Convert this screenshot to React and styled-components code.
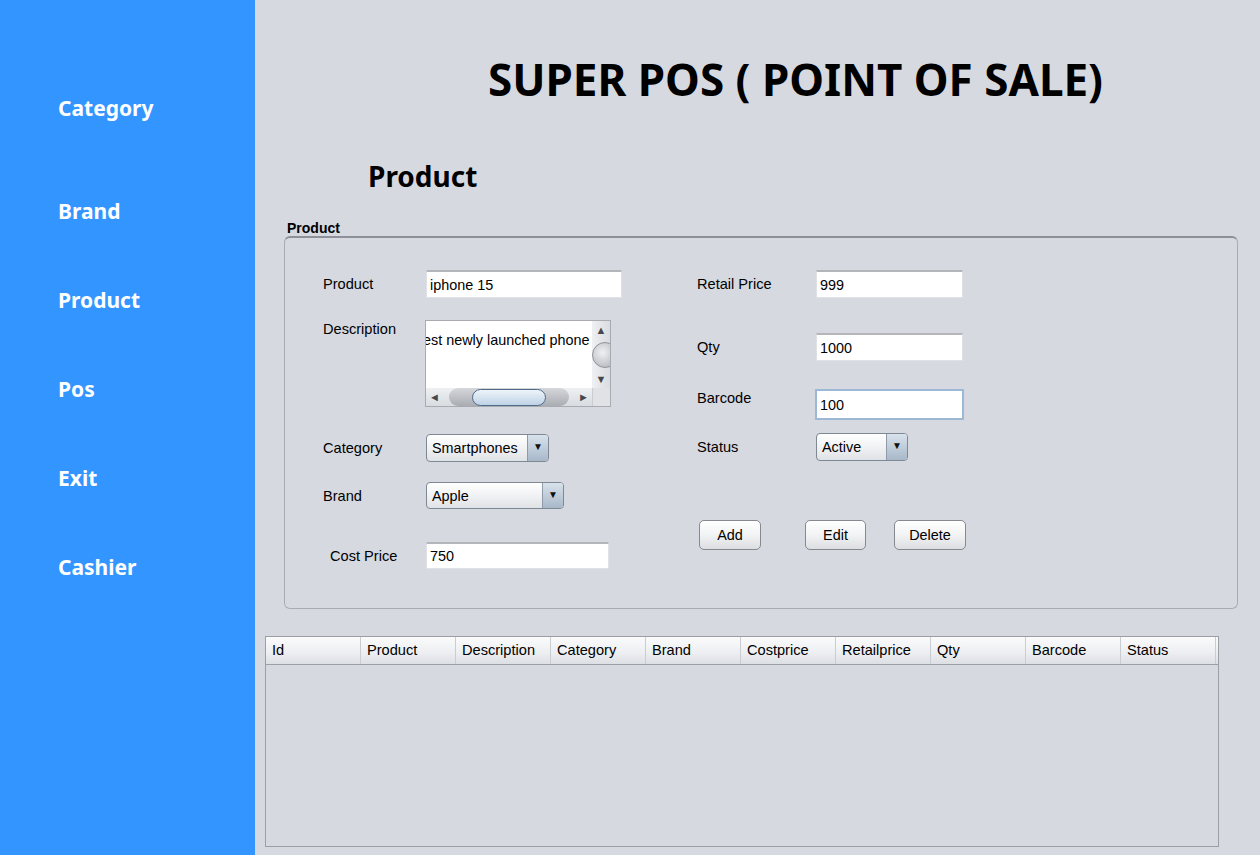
import React from "react"
import styled, { createGlobalStyle } from "styled-components"

const GlobalStyle = createGlobalStyle`
  html, body {
    margin: 0;
    padding: 0;
  }
  body {
    font-family: "Liberation Sans", Arial, sans-serif;
    background: #d6d9e0;
  }
`

const NAV = ["Category", "Brand", "Product", "Pos", "Exit", "Cashier"]
const COLUMNS = ["Id", "Product", "Description", "Category", "Brand", "Costprice", "Retailprice", "Qty", "Barcode", "Status"]

const App = () => {
  return (
    <>
      <GlobalStyle />
      <Shell>
        <Sidebar>
          {NAV.map((item, i) => (
            <NavItem key={item} $tall={i === 0}>
              {item}
            </NavItem>
          ))}
        </Sidebar>
        <Main>
          <Title>SUPER POS ( POINT OF SALE)</Title>
          <Heading>Product</Heading>
          <Legend>Product</Legend>
          <Panel>
            <Column $width={374}>
              <Row>
                <Label $width={103}>Product</Label>
                <Field $width={196} value="iphone 15" readOnly />
              </Row>
              <Row $top={22} $align="flex-start">
                <Label $width={103} $pad={1}>Description</Label>
                <ScrollPane>
                  <TextArea>
                    <span>est newly launched phone</span>
                  </TextArea>
                  <VBar>
                    <Arrow>▲</Arrow>
                    <VThumb />
                    <Arrow>▼</Arrow>
                  </VBar>
                  <HBar>
                    <Arrow>◄</Arrow>
                    <HTrack>
                      <HThumb />
                    </HTrack>
                    <Arrow>►</Arrow>
                  </HBar>
                  <Corner />
                </ScrollPane>
              </Row>
              <Row $top={27}>
                <Label $width={103}>Category</Label>
                <Combo $width={123}>
                  <ComboValue>Smartphones</ComboValue>
                  <ComboArrow>▼</ComboArrow>
                </Combo>
              </Row>
              <Row $top={20}>
                <Label $width={103}>Brand</Label>
                <Combo $width={138} $height={27}>
                  <ComboValue>Apple</ComboValue>
                  <ComboArrow>▼</ComboArrow>
                </Combo>
              </Row>
              <Row $top={33}>
                <Label $width={103} $indent={7}>Cost Price</Label>
                <Field $width={183} $height={27} value="750" readOnly />
              </Row>
            </Column>
            <Column>
              <Row>
                <Label $width={119}>Retail Price</Label>
                <Field $width={147} value="999" readOnly />
              </Row>
              <Row $top={35}>
                <Label $width={119}>Qty</Label>
                <Field $width={147} value="1000" readOnly />
              </Row>
              <Row $top={28} $align="flex-start">
                <Label $width={118} $pad={1}>Barcode</Label>
                <Field $width={149} $height={31} $focused value="100" readOnly />
              </Row>
              <Row $top={13}>
                <Label $width={119}>Status</Label>
                <Combo $width={92}>
                  <ComboValue>Active</ComboValue>
                  <ComboArrow>▼</ComboArrow>
                </Combo>
              </Row>
              <ButtonRow>
                <Button $width={62}>Add</Button>
                <Button $width={61}>Edit</Button>
                <Button $width={72}>Delete</Button>
              </ButtonRow>
            </Column>
          </Panel>
          <Table>
            <HeaderRow>
              {COLUMNS.map(c => (
                <HeaderCell key={c}>{c}</HeaderCell>
              ))}
            </HeaderRow>
            <TableBody />
          </Table>
        </Main>
      </Shell>
    </>
  )
}

export default App

const Shell = styled.div`
  display: flex;
  width: 1260px;
  height: 855px;
  overflow: hidden;
  background: #d6d9e0;
`

const Sidebar = styled.nav`
  width: 255px;
  flex-shrink: 0;
  background: #3395ff;
  display: flex;
  flex-direction: column;
  padding: 92px 0 0 58px;
  box-sizing: border-box;
`

const NavItem = styled.div`
  height: ${p => (p.$tall ? 103 : 89)}px;
  flex-shrink: 0;
  color: #fff;
  font-family: "Noto Sans", "Open Sans", sans-serif;
  font-weight: 700;
  font-size: 21px;
  line-height: 32px;
`

const Main = styled.main`
  flex: 1;
  display: flex;
  flex-direction: column;
  padding-top: 51px;
`

const Title = styled.h1`
  margin: 0 0 0 233px;
  font-family: "Noto Sans", "Open Sans", sans-serif;
  font-weight: 700;
  font-size: 44px;
  line-height: 56px;
  color: #000;
  white-space: nowrap;
`

const Heading = styled.h2`
  margin: 51px 0 0 113px;
  font-family: "Noto Sans", "Open Sans", sans-serif;
  font-weight: 700;
  font-size: 28px;
  line-height: 36px;
  color: #000;
`

const Legend = styled.div`
  margin: 26px 0 0 32px;
  font-size: 14px;
  font-weight: 700;
  line-height: 16px;
  color: #000;
`

const Panel = styled.section`
  margin: 0 22px 0 29px;
  height: 373px;
  box-sizing: border-box;
  border: 1px solid #a9acb2;
  border-top: 2px solid #8d9096;
  border-radius: 6px;
  padding: 32px 0 0 38px;
  display: flex;
`

const Column = styled.div`
  display: flex;
  flex-direction: column;
  width: ${p => (p.$width ? `${p.$width}px` : "auto")};
  flex-shrink: 0;
`

const Row = styled.div`
  display: flex;
  align-items: ${p => p.$align || "center"};
  margin-top: ${p => p.$top || 0}px;
`

const Label = styled.span`
  width: ${p => p.$width}px;
  flex-shrink: 0;
  padding-left: ${p => p.$indent || 0}px;
  padding-top: ${p => p.$pad || 0}px;
  box-sizing: border-box;
  font-size: 14.6px;
  color: #000;
`

const Field = styled.input`
  width: ${p => p.$width}px;
  height: ${p => p.$height || 28}px;
  box-sizing: border-box;
  background: #fff;
  border: ${p => (p.$focused ? "2px solid #9cb8d4" : "1px solid #dfe1e4")};
  border-top: ${p => (p.$focused ? "2px solid #9cb8d4" : "2px solid #b4b6ba")};
  padding: 0 0 0 3px;
  margin: 0;
  font-family: "Liberation Sans", Arial, sans-serif;
  font-size: 14.4px;
  color: #000;
  outline: none;
`

const ScrollPane = styled.div`
  width: 186px;
  height: 87px;
  margin-left: -1px;
  box-sizing: border-box;
  border: 1px solid #a8abb0;
  display: grid;
  grid-template-columns: 1fr 18px;
  grid-template-rows: 1fr 18px;
  background: #e4e6ea;
`

const TextArea = styled.div`
  background: #fff;
  overflow: hidden;
  white-space: nowrap;
  font-size: 14.4px;
  line-height: 16px;
  padding-top: 11px;

  span {
    display: inline-block;
    margin-left: -3px;
  }
`

const VBar = styled.div`
  display: flex;
  flex-direction: column;
  align-items: center;
  justify-content: space-between;
  background: linear-gradient(90deg, #eef0f2, #d9dce0);
  overflow: hidden;
`

const Arrow = styled.span`
  font-size: 11px;
  line-height: 18px;
  width: 17px;
  text-align: center;
  color: #45484d;
  flex-shrink: 0;
`

const VThumb = styled.div`
  width: 24px;
  height: 24px;
  margin-left: 8px;
  border-radius: 50%;
  background: radial-gradient(circle at 40% 40%, #f0f1f3, #a8abb1);
  border: 1px solid #8f9299;
`

const HBar = styled.div`
  display: flex;
  align-items: center;
  justify-content: space-between;
  background: linear-gradient(180deg, #eef0f2, #d9dce0);
  overflow: hidden;
`

const HTrack = styled.div`
  flex: 1;
  height: 18px;
  margin: 0 6px;
  border-radius: 10px;
  background: linear-gradient(180deg, #d5d7db, #a9acb1);
  display: flex;
  justify-content: center;
  align-items: center;
`

const HThumb = styled.div`
  width: 74px;
  height: 17px;
  margin-top: 1px;
  box-sizing: border-box;
  border-radius: 9px;
  border: 1px solid #506b87;
  background: linear-gradient(180deg, #eef4fa, #bfd2e6);
`

const Corner = styled.div`
  background: #e0e2e6;
  border-left: 1px solid #c9ccd1;
`

const Combo = styled.div`
  width: ${p => p.$width}px;
  height: ${p => p.$height || 28}px;
  box-sizing: border-box;
  border: 1px solid #7f8994;
  border-radius: 4px;
  background: linear-gradient(180deg, #ffffff 0%, #f1f2f4 50%, #dfe2e6 100%);
  display: flex;
  overflow: hidden;
`

const ComboValue = styled.span`
  flex: 1;
  padding-left: 5px;
  font-size: 14.4px;
  line-height: 26px;
  color: #000;
`

const ComboArrow = styled.span`
  width: 20px;
  border-left: 1px solid #8e9aa8;
  background: linear-gradient(180deg, #d8e2ec, #a8b8c9);
  font-size: 10px;
  line-height: 24px;
  text-align: center;
  color: #111;
`

const ButtonRow = styled.div`
  display: flex;
  margin-top: 59px;
  padding-left: 2px;
  gap: 44px;

  & > :nth-child(3) {
    margin-left: -16px;
  }
`

const Button = styled.button`
  width: ${p => p.$width}px;
  height: 30px;
  box-sizing: border-box;
  border: 1px solid #868a90;
  border-radius: 5px;
  background: linear-gradient(180deg, #ffffff 0%, #f2f3f4 50%, #dcdee1 100%);
  font-family: "Liberation Sans", Arial, sans-serif;
  font-size: 14.4px;
  color: #000;
  padding: 0;
`

const Table = styled.div`
  margin: 27px 0 0 10px;
  width: 954px;
  height: 211px;
  box-sizing: border-box;
  border: 1px solid #9a9ea5;
  display: flex;
  flex-direction: column;
`

const HeaderRow = styled.div`
  display: grid;
  grid-template-columns: repeat(10, 95px);
  height: 27px;
  border-bottom: 1px solid #9a9ea5;
  background: linear-gradient(180deg, #fbfbfc 0%, #eceef1 60%, #dcdfe3 100%);
`

const HeaderCell = styled.div`
  font-size: 14.6px;
  line-height: 27px;
  padding-left: 6px;
  border-right: 1px solid #c9ccd1;
  color: #000;
`

const TableBody = styled.div`
  flex: 1;
  background: #d6d9e0;
`
